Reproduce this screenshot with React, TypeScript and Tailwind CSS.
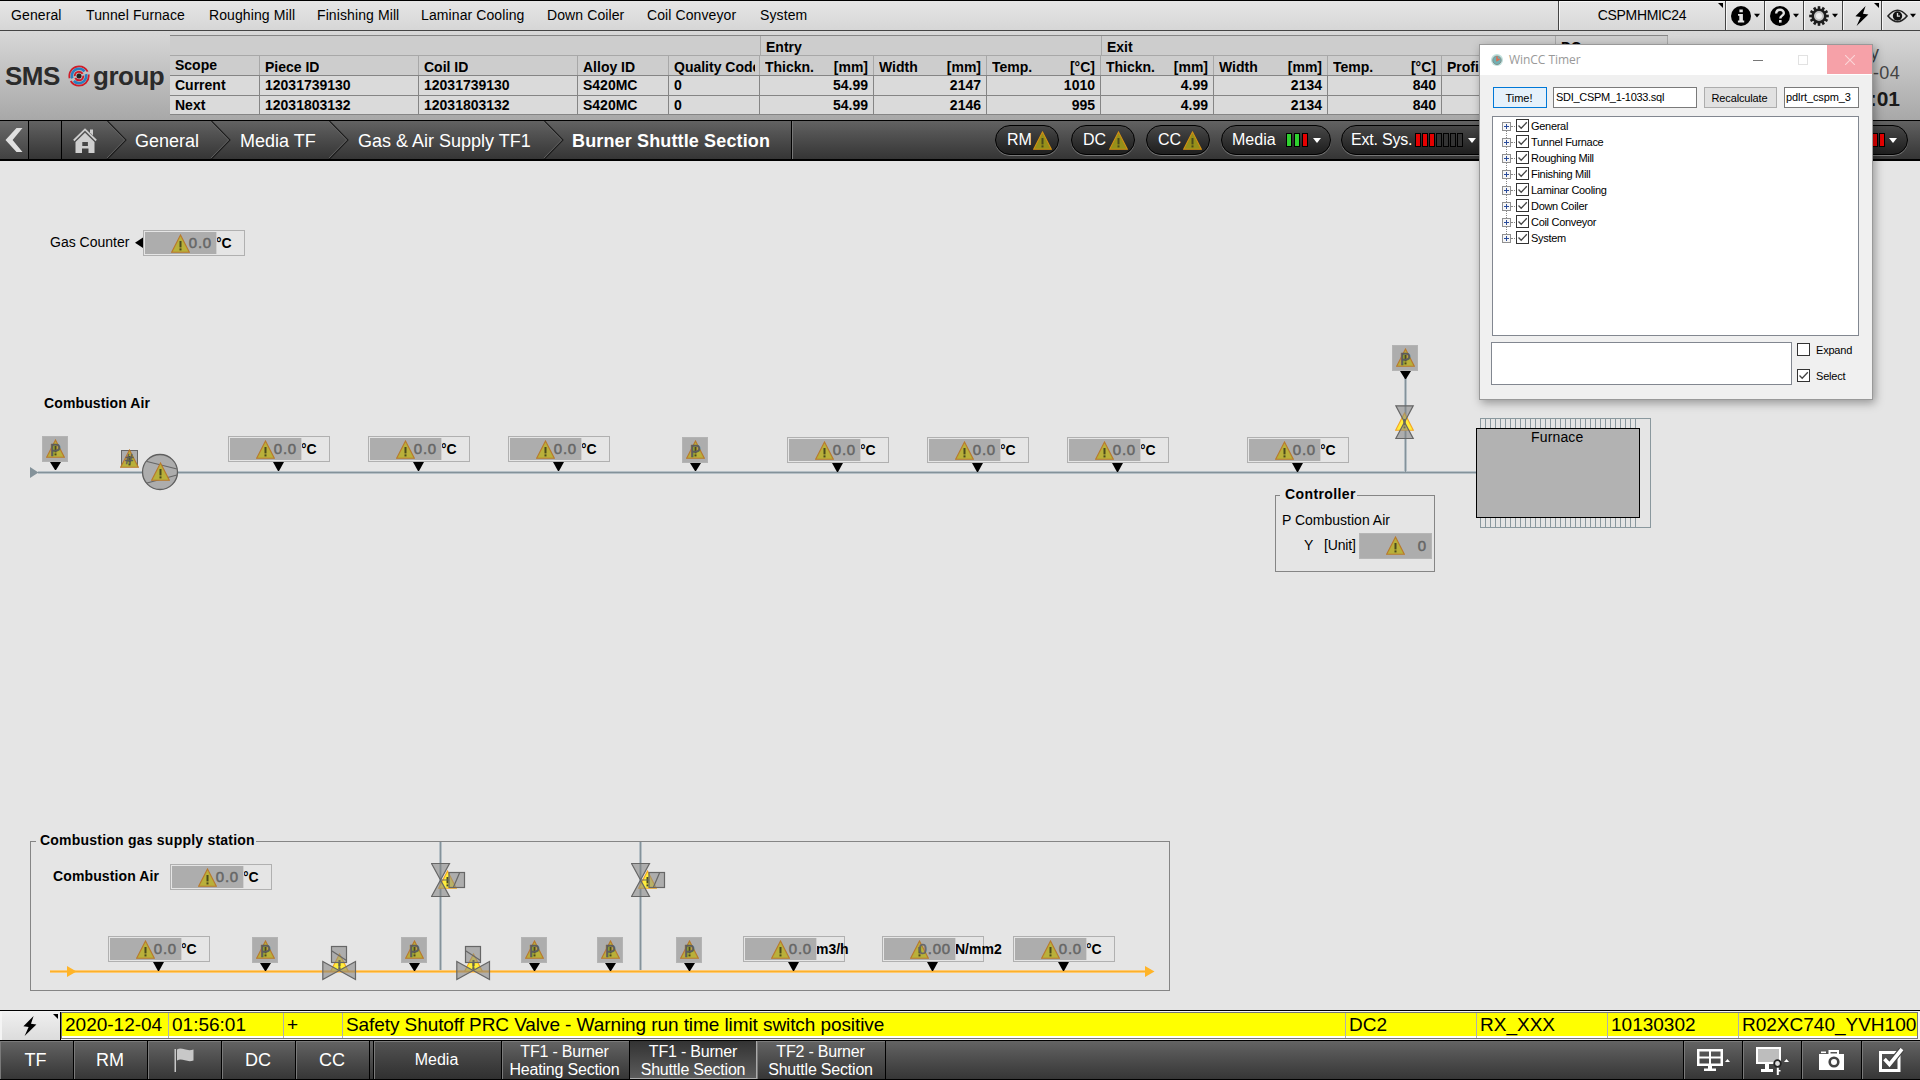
import React from 'react';

const sans = "font-['Liberation_Sans',Arial,sans-serif]";

/* ---------- shared drawings ---------- */

function Warn({ bright = false, dark = false }: { bright?: boolean; dark?: boolean }) {
  const fill = bright ? '#ffee3c' : dark ? '#96901a' : '#b9b03a';
  const stroke = bright ? '#f5a623' : dark ? '#d08f14' : '#b9792c';
  return (
    <svg viewBox="0 0 19 19" className="block h-[19px] w-[19px] shrink-0">
      <path d="M9.5 1 L18.3 18.2 H0.7 Z" fill={fill} stroke={stroke} strokeWidth="1.1" />
      <rect x="8.5" y="7" width="2" height="6.4" fill="#4a4a1c" />
      <rect x="8.5" y="14.4" width="2" height="2" fill="#4a4a1c" />
    </svg>
  );
}

function Bolt() {
  return (
    <svg viewBox="0 0 14 20" className="h-5 w-3.5">
      <path d="M10.6 0 L0.4 10.2 L5.6 11 L1.6 20 L13.4 8.6 L8 7.8 Z" fill="#000" />
    </svg>
  );
}

function Down({ className = '' }: { className?: string }) {
  return (
    <svg viewBox="0 0 8 5" className={`h-[5px] w-2 shrink-0 ${className}`}>
      <path d="M0 0 H8 L4 5 Z" fill="currentColor" />
    </svg>
  );
}

function Corner() {
  return (
    <svg viewBox="0 0 5 5" className="absolute right-[2px] top-[2px] h-[5px] w-[5px]">
      <path d="M0 0 H5 V5 Z" fill="#000" />
    </svg>
  );
}

/* ---------- top menu ---------- */

const menu = [
  ['General', 'w-[75px]'],
  ['Tunnel Furnace', 'w-[123px]'],
  ['Roughing Mill', 'w-[108px]'],
  ['Finishing Mill', 'w-[104px]'],
  ['Laminar Cooling', 'w-[126px]'],
  ['Down Coiler', 'w-[100px]'],
  ['Coil Conveyor', 'w-[113px]'],
  ['System', 'w-[80px]'],
];

const toolCell =
  'relative flex h-full items-center justify-center border-l border-[#444] bg-linear-to-b from-[#e6e6e6] to-[#d8d8d8] shadow-[inset_1px_1px_0_#f6f6f6]';

const teeth = [0, 30, 60, 90, 120, 150];

function MenuBar() {
  return (
    <div className="flex h-[31px] border-t border-b border-t-black border-b-[#444] bg-linear-to-b from-[#e6e6e6] to-[#d6d6d6]">
      <nav className="flex flex-1 items-center pl-[11px] text-[14px] tracking-[0.1px] text-black">
        {menu.map(([label, w]) => (
          <span key={label} className={`${w} whitespace-nowrap`}>{label}</span>
        ))}
      </nav>
      <div className={`${toolCell} w-[167px] text-[14px] tracking-[-0.350px]`}>CSPMHMIC24<Corner /></div>
      <div className={`${toolCell} w-[39px] gap-[3px]`}>
        <svg viewBox="0 0 20 20" className="h-5 w-5">
          <circle cx="10" cy="10" r="10" fill="#000" />
          <path d="M8.400 3.400h3.400v2.800H8.400zM7 8h4.900v6.600h1.300v1.800H6.900v-1.800h1.400V9.800H7z" fill="#e4e4e4" />
        </svg>
        <Down className="w-[6px]" />
      </div>
      <div className={`${toolCell} w-[39px] gap-[3px]`}>
        <svg viewBox="0 0 20 20" className="h-5 w-5">
          <circle cx="10" cy="10" r="10" fill="#000" />
          <path d="M6.200 7.600c0-5.200 7.800-5 7.600-.4-.1 2.300-3.500 2.700-3.500 5.200" fill="none" stroke="#e4e4e4" strokeWidth="2.400" />
          <rect x="9" y="14" width="2.600" height="2.600" fill="#e4e4e4" />
        </svg>
        <Down className="w-[6px]" />
      </div>
      <div className={`${toolCell} w-[39px] gap-[3px]`}>
        <svg viewBox="0 0 20 20" className="h-5 w-5">
          {teeth.map((a) => (
            <rect key={a} x="8.700" y="0.200" width="2.600" height="19.600" fill="#1c1c1c" transform={`rotate(${a} 10 10)`} />
          ))}
          <circle cx="10" cy="10" r="6.300" fill="#c4c4c4" stroke="#1c1c1c" strokeWidth="2.600" />
          <circle cx="10" cy="10" r="3" fill="#ececec" />
        </svg>
        <Down className="w-[6px]" />
      </div>
      <div className={`${toolCell} w-[39px]`}><Bolt /><Corner /></div>
      <div className={`${toolCell} w-[39px] gap-[2px]`}>
        <svg viewBox="0 0 22 16" className="h-4 w-[21px]">
          <path d="M1 8 Q11 -4 21 8 Q11 20 1 8 Z" fill="none" stroke="#222" strokeWidth="1.700" />
          <circle cx="11" cy="8" r="4.900" fill="#111" />
          <path d="M11 4.800v3.300h2.600" stroke="#ddd" strokeWidth="1.400" fill="none" />
        </svg>
        <Down className="w-[6px]" />
      </div>
    </div>
  );
}

/* ---------- header with piece table ---------- */

function Logo() {
  return (
    <div className="flex h-full w-[170px] items-center pl-[5px] text-[26px] font-bold leading-none tracking-[-0.500px] text-[#2b2b2b]">
      <span className="w-[63px]">SMS</span>
      <svg viewBox="0 0 22 22" className="h-[22px] w-[22px] shrink-0">
        <circle cx="11" cy="11" r="9.700" fill="none" stroke="#d01c28" strokeWidth="1.800" strokeDasharray="25 3 28 3" />
        <circle cx="11" cy="11" r="7.200" fill="none" stroke="#2a7fbf" strokeWidth="2.600" strokeDasharray="17 3 20 3" />
        <circle cx="11" cy="11" r="4.300" fill="none" stroke="#d01c28" strokeWidth="1.900" strokeDasharray="11 2" />
        <circle cx="11" cy="11" r="2.500" fill="#222" />
      </svg>
      <span className="pl-[3px]">group</span>
    </div>
  );
}

type Col = { w: string; name: string; unit?: string; cur: string; next: string; num?: boolean };

const cols: Col[] = [
  { w: 'w-[90px]', name: 'Scope', cur: 'Current', next: 'Next' },
  { w: 'w-[159px]', name: 'Piece ID', cur: '12031739130', next: '12031803132' },
  { w: 'w-[159px]', name: 'Coil ID', cur: '12031739130', next: '12031803132' },
  { w: 'w-[91px]', name: 'Alloy ID', cur: 'S420MC', next: 'S420MC' },
  { w: 'w-[91px]', name: 'Quality Code', cur: '0', next: '0' },
  { w: 'w-[114px]', name: 'Thickn.', unit: '[mm]', cur: '54.99', next: '54.99', num: true },
  { w: 'w-[113px]', name: 'Width', unit: '[mm]', cur: '2147', next: '2146', num: true },
  { w: 'w-[114px]', name: 'Temp.', unit: '[°C]', cur: '1010', next: '995', num: true },
  { w: 'w-[113px]', name: 'Thickn.', unit: '[mm]', cur: '4.99', next: '4.99', num: true },
  { w: 'w-[114px]', name: 'Width', unit: '[mm]', cur: '2134', next: '2134', num: true },
  { w: 'w-[114px]', name: 'Temp.', unit: '[°C]', cur: '840', next: '840', num: true },
  { w: 'w-[113px]', name: 'Profile', cur: '', next: '' },
  { w: 'w-[112px]', name: '', cur: '', next: '' },
];

const group = 'border-r border-[#a8a8a8] pl-[5px] pt-[4px]';

function PieceTable() {
  const cell = 'h-5 border-r border-t border-[#858585] pl-[5px] flex items-center overflow-hidden whitespace-nowrap';
  return (
    <div className="mt-[4px] flex h-[80px] w-[1498px] flex-col overflow-hidden border-b border-[#858585] text-[14px] font-bold leading-none text-black">
      <div className="flex h-5 shrink-0 border-t border-[#858585] bg-[#cdcdcd]">
        <div className="w-[591px] border-r border-[#a8a8a8]" />
        <div className={`${group} w-[341px]`}>Entry</div>
        <div className={`${group} w-[454px]`}>Exit</div>
        <div className={`${group} w-[112px]`}>DC</div>
      </div>
      <div className="flex">
        {cols.map((c, i) => (
          <div key={i} className={`${c.w} shrink-0`}>
            <div className={`${cell} border-t-[#a8a8a8] border-r-[#a8a8a8] bg-[#cdcdcd] ${i === 0 ? 'pb-[1px]' : 'pt-[3px]'} ${i === 4 ? 'pr-[4px]' : i === 5 || i === 6 ? 'pr-[5px]' : 'pr-[5px]'}`}>
              <span className="overflow-hidden py-[2px]">{c.name}</span>
              {c.unit && <span className="ml-auto">{c.unit}</span>}
            </div>
            <div className={`${cell} bg-[#dadada] pb-[1px] pr-[5px] ${c.num ? 'justify-end' : ''}`}>{c.cur}</div>
            <div className={`${cell} bg-[#dadada] pb-[1px] pr-[5px] ${c.num ? 'justify-end' : ''}`}>{c.next}</div>
          </div>
        ))}
      </div>
    </div>
  );
}

function Header() {
  return (
    <div className="flex h-[89px] bg-linear-to-b from-[#d8d8d8] to-[#a8a8a8]">
      <Logo />
      <PieceTable />
      <div className="flex flex-1 flex-col items-end pr-[20px] pt-[13px] text-[18px] leading-[19px] text-[#444]">
        <span className="mr-[21px]">Friday</span>
        <span className="mt-px tracking-[0.300px]">2020-12-04</span>
        <span className="mt-[6px] text-[21px] font-bold text-[#1a1a1a]">01:56:01</span>
      </div>
    </div>
  );
}

/* ---------- navigation bar ---------- */

function Chevron() {
  return (
    <svg viewBox="0 0 20 38" className="h-[38px] w-5 shrink-0">
      <path d="M0.500 0 L19 19 L0.500 38" fill="none" stroke="#1c1c1c" strokeWidth="1.100" />
      <path d="M-1 0 L17.600 19 L-1 38" fill="none" stroke="#6a6a6a" strokeWidth="0.800" />
    </svg>
  );
}

const pill =
  'flex h-[30px] shrink-0 items-center rounded-full border border-black bg-linear-to-b from-[#484848] to-[#1e1e1e] text-[16px] text-white shadow-[0_1px_0_#777]';

function Bars({ colors, gap }: { colors: string[]; gap: string }) {
  return (
    <div className={`flex ${gap}`}>
      {colors.map((c, i) => (
        <i key={i} className={`block h-[14px] w-[6px] border border-black ${c}`} />
      ))}
    </div>
  );
}

const G = 'bg-[#2fd02f]';
const R = 'bg-[#e60000]';
const N = 'bg-[#333]';

function NavBar() {
  return (
    <div className="flex h-[41px] items-center border-t border-b-2 border-black bg-linear-to-b from-[#626262] to-[#353535] text-[18px] text-white">
      <div className="flex h-full w-[29px] items-center justify-center border-r border-black bg-linear-to-b from-[#6a6a6a] to-[#424242]">
        <svg viewBox="0 0 18 24" className="h-6 w-[18px]">
          <path d="M11.500 0 H17.500 L7.600 12 L17.500 24 H11.500 L0.500 12 Z" fill="#e0e0e0" />
        </svg>
      </div>
      <div className="h-full w-[33px] border-r border-black" />
      <div className="flex w-[45px] justify-center">
        <svg viewBox="0 0 24 25" className="h-[25px] w-6">
          <path d="M0.800 12.500 L12 1.400 L23.200 12.500" fill="none" stroke="#cfcfcf" strokeWidth="1.800" />
          <path d="M17 1.500h3v6l-3-3z" fill="#cfcfcf" />
          <path d="M2.500 14 L12 4.800 L21.500 14 V25 H15.500 V20.500 H9 V25 H2.500 Z M9.300 14v4h5.600v-4z" fill="#cfcfcf" fillRule="evenodd" />
        </svg>
      </div>
      <Chevron />
      <span className="w-[84px] pl-[8px] pt-[2px]">General</span>
      <Chevron />
      <span className="w-[98px] pl-[9px] pt-[2px]">Media TF</span>
      <Chevron />
      <span className="w-[195px] whitespace-nowrap pl-[9px] pt-[2px]">Gas &amp; Air Supply TF1</span>
      <Chevron />
      <span className="flex h-full w-[228px] items-center whitespace-nowrap border-r border-black pl-[8px] pt-[2px] font-bold tracking-[0.140px]">Burner Shuttle Section</span>
      <div className="h-full w-[203px] border-l border-[#777]" />
      <div className={`${pill} mr-[12px] w-[64px] pl-[11px]`}>RM<span className="ml-[1px]"><Warn dark /></span></div>
      <div className={`${pill} mr-[11px] w-[64px] pl-[11px]`}>DC<span className="ml-[3px]"><Warn dark /></span></div>
      <div className={`${pill} mr-[11px] w-[64px] pl-[11px]`}>CC<span className="ml-[2px]"><Warn dark /></span></div>
      <div className={`${pill} mr-[10px] w-[110px] pl-[10px]`}>
        <span className="w-[54px]">Media</span>
        <Bars colors={[G, G, R]} gap="gap-[2px]" />
        <Down className="ml-[5px]" />
      </div>
      <div className={`${pill} w-[200px] pl-[9px]`}>
        <span className="w-[64px] tracking-[-0.200px]">Ext. Sys.</span>
        <Bars colors={[R, R, R, N, N, N, N]} gap="gap-[1px]" />
        <Down className="ml-[5px]" />
      </div>
      <div className={`${pill} ml-auto mr-[12px] w-[200px] justify-end pr-[10px]`}>
        <Bars colors={[R, R, R]} gap="gap-[1px]" />
        <Down className="ml-[4px]" />
      </div>
    </div>
  );
}

/* ---------- process picture ---------- */

const at = (x: number, y: number) => ({ left: x, top: y });

function Tip({ x, y, h = 9 }: { x: number; y: number; h?: number }) {
  return (
    <svg viewBox="0 0 11 9" preserveAspectRatio="none" className="absolute w-[11px]" style={{ ...at(x, y), height: h }}>
      <path d="M0 0 H11 L6 9 H5 Z" fill="#000" />
    </svg>
  );
}

function Meter({ x, y, unit = '°C', value = '0.0', tip = true }: { x: number; y: number; unit?: string; value?: string; tip?: boolean }) {
  return (
    <>
      <div className="absolute flex h-[26px] w-[102px] items-center border border-[#b0b0b0] p-[1px]" style={at(x, y)}>
        <div className="relative flex h-[22px] w-[71px] shrink-0 items-center justify-end bg-[#adadad] pr-[4px] shadow-[1px_0_0_#d0d0d0]">
          <span className="absolute left-[26px] top-[2px]"><Warn /></span>
          <span className="relative text-[15px] tracking-[0.800px] text-[#666] [-webkit-text-stroke:0.500px_#666]">{value}</span>
        </div>
        <span className="whitespace-nowrap text-[14px] font-bold text-black">{unit}</span>
      </div>
      {tip && <Tip x={x + 45} y={y + 26} />}
    </>
  );
}

function Pressure({ x, y }: { x: number; y: number }) {
  return (
    <>
      <div className="absolute h-[26px] w-[26px] border border-[#b4b4b4] bg-[#adadad]" style={at(x, y)}>
        <span className="absolute left-[3px] top-[2px]"><Warn /></span>
        <span className="absolute left-[7px] top-[5px] text-[16px] leading-[18px] text-[#5c5c5c] [-webkit-text-stroke:0.600px_#5c5c5c]">P</span>
      </div>
      <Tip x={x + 8} y={y + 26} h={8} />
    </>
  );
}

const body = { fill: '#848484', fillOpacity: 0.58, stroke: '#666', strokeWidth: 1.2 };

function SideValve({ x }: { x: number }) {
  return (
    <div className="absolute h-9 w-9" style={at(x, 862)}>
      <span className="absolute left-[7px] top-[8px]"><Warn bright /></span>
      <svg viewBox="0 0 36 36" className="absolute inset-0 h-9 w-9">
        <path d="M0.500 1.500 H18.500 L0.500 34.500 H18.500 Z" {...body} />
        <rect x="18" y="10.500" width="15.500" height="15" {...body} />
        <path d="M9.500 18 H18 M22.500 25 L28.500 11" stroke="#666" strokeWidth="1.200" />
      </svg>
    </div>
  );
}

function LineValve({ x }: { x: number }) {
  return (
    <div className="absolute h-9 w-9" style={at(x, 945)}>
      <span className="absolute left-[8px] top-[8px]"><Warn bright /></span>
      <svg viewBox="0 0 36 36" className="absolute inset-0 h-9 w-9">
        <path d="M0.800 16.500 V34.500 L33.500 16.500 V34.500 Z" {...body} />
        <rect x="9.500" y="1.500" width="15" height="16" {...body} />
        <path d="M17.200 17.500 V25 M10 6 L24.500 15.500" stroke="#666" strokeWidth="1.200" />
      </svg>
    </div>
  );
}

function Label({ x, y, className = '', children }: { x: number; y: number; className?: string; children: React.ReactNode }) {
  return (
    <span className={`absolute whitespace-nowrap text-[14px] leading-4 text-black ${className}`} style={at(x, y - 8)}>
      {children}
    </span>
  );
}

const fins = Array.from({ length: 32 }, (_, i) => 1480.5 + i * 5);

function Process() {
  return (
    <div className="relative h-[849px] shrink-0 overflow-hidden bg-[#e5e5e5]">
      <div className="absolute -top-[161px] left-0 h-[1010px] w-[1920px]">
        <div className="absolute left-[1275px] top-[495px] h-[77px] w-[160px] border border-[#858585]" />
        <div className="absolute left-[30px] top-[841px] h-[150px] w-[1140px] border border-[#858585]" />
        <svg viewBox="0 0 1920 1010" className="absolute inset-0 h-[1010px] w-[1920px]">
          <path d="M38 472.500 H1476 M1405.500 371 V472 M440.500 842 V971 M640.500 842 V971" stroke="#b6c0c6" strokeWidth="3" />
          <path d="M38 472.500 H1476 M1405.500 371 V472 M440.500 842 V971 M640.500 842 V971" stroke="#84929a" strokeWidth="1" />
          <path d="M30 467 L38.500 472.500 L30 478 Z" fill="#84929a" />
          <path d="M50 971.500 H1146" stroke="#ffd288" strokeWidth="3" />
          <path d="M50 971.500 H1146" stroke="#fbb02c" strokeWidth="1.400" />
          <path d="M67 966 L76.500 971.500 L67 977 Z M1145 966 L1154.500 971.500 L1145 977 Z" fill="#ffb428" />
          <path d="M143 237.500 V248 L135 242.700 Z" fill="#000" />
          <rect x="1480.500" y="418.500" width="170" height="109" fill="none" stroke="#8a989e" />
          {fins.map((x) => (
            <path key={x} d={`M${x} 418 V528`} stroke="#8a989e" />
          ))}
          <rect x="1476.500" y="428.500" width="163" height="89" fill="#b2b2b2" stroke="#000" />
          <circle cx="160" cy="472" r="17.500" fill="#adadad" stroke="#5f5f5f" strokeWidth="1.300" />
          <path d="M147 461.500 L177 469 M147 483 L177 475" stroke="#666" strokeWidth="1.200" />
        </svg>

        <Label x={50} y={242}>Gas Counter</Label>
        <Label x={44} y={403} className="font-bold tracking-[0.120px]">Combustion Air</Label>
        <Label x={1531} y={437} className="tracking-[0.150px]">Furnace</Label>
        <Label x={1280} y={494} className="bg-[#e5e5e5] pl-[5px] pr-[1px] font-bold tracking-[0.400px]">Controller</Label>
        <Label x={1282} y={520}>P Combustion Air</Label>
        <Label x={1304} y={545}>Y</Label>
        <Label x={1324} y={545} className="tracking-[-0.150px]">[Unit]</Label>
        <Label x={36} y={840} className="bg-[#e5e5e5] pl-[4px] pr-[1px] font-bold tracking-[0.220px]">Combustion gas supply station</Label>
        <Label x={53} y={876} className="font-bold tracking-[0.120px]">Combustion Air</Label>

        <Meter x={143} y={230} tip={false} />
        <Meter x={228} y={436} />
        <Meter x={368} y={436} />
        <Meter x={508} y={436} />
        <Meter x={787} y={437} />
        <Meter x={927} y={437} />
        <Meter x={1067} y={437} />
        <Meter x={1247} y={437} />
        <Meter x={170} y={864} tip={false} />
        <Meter x={108} y={936} />
        <Meter x={743} y={936} unit="m3/h" />
        <Meter x={882} y={936} unit="N/mm2" value="0.00" />
        <Meter x={1013} y={936} />

        <Pressure x={42} y={436} />
        <Pressure x={682} y={437} />
        <Pressure x={1392} y={345} />
        <Pressure x={252} y={937} />
        <Pressure x={401} y={937} />
        <Pressure x={521} y={937} />
        <Pressure x={597} y={937} />
        <Pressure x={676} y={937} />

        <div className="absolute left-[121px] top-[450px] h-[17px] w-[17px] border border-[#666] bg-[#adadad]">
          <span className="absolute -left-[2px] -top-[2px]"><Warn /></span>
          <span className="absolute left-[3px] top-0 text-[14px] italic leading-4 text-[#5c5c5c] [-webkit-text-stroke:0.500px_#5c5c5c]">#</span>
        </div>
        <span className="absolute left-[151px] top-[462px]"><Warn /></span>

        <div className="absolute left-[1359px] top-[533px] flex h-[26px] w-[73px] items-center justify-end border border-[#b6b6b6] bg-[#adadad] pr-[5px] text-[15px] text-[#666] [-webkit-text-stroke:0.500px_#666]">
          <span className="absolute left-[26px] top-[2px]"><Warn /></span>0
        </div>

        <div className="absolute left-[1395px] top-[405px] h-[35px] w-[20px]">
          <span className="absolute left-0 top-[7px]"><Warn bright /></span>
          <svg viewBox="0 0 20 35" className="absolute inset-0 h-[35px] w-5">
            <path d="M0.800 0.800 H18.200 L0.800 33.500 H18.200 Z" {...body} />
          </svg>
        </div>
        <SideValve x={431} />
        <SideValve x={631} />
        <LineValve x={322} />
        <LineValve x={456} />
      </div>
    </div>
  );
}

/* ---------- alarm line ---------- */

const alarm = [
  ['w-[107px]', '2020-12-04'],
  ['w-[115px]', '01:56:01'],
  ['w-[59px]', '+'],
  ['w-[1003px] tracking-[-0.080px]', 'Safety Shutoff PRC Valve - Warning run time limit switch positive'],
  ['w-[131px]', 'DC2'],
  ['w-[131px]', 'RX_XXX'],
  ['w-[131px]', '10130302'],
  ['w-[179px]', 'R02XC740_YVH100'],
];

function AlarmLine() {
  return (
    <div className="flex h-[30px] border-t border-black bg-[#f4f4f4] pl-[2px]">
      <div className="relative mt-px flex w-[59px] items-center justify-center border-r border-black bg-linear-to-b from-[#efefef] to-[#dcdcdc] pr-[2px]">
        <Bolt />
        <Corner />
      </div>
      <div className="mt-px flex h-[27px] w-[1857px] overflow-hidden border border-[#777] bg-white text-[19px] leading-[23px] text-black">
        {alarm.map(([w, t]) => (
          <div key={t} className={`${w} shrink-0 border-r border-[#b0b0b0]`}>
            <div className="h-[23px] overflow-hidden whitespace-nowrap bg-[#ffff00] pl-[3px]">{t}</div>
          </div>
        ))}
      </div>
    </div>
  );
}

/* ---------- bottom bar ---------- */

const dark = 'flex h-full items-center justify-center border-r border-black shadow-[inset_1px_1px_0_#7a7a7a] text-center';

function BottomBar() {
  return (
    <div className="flex h-10 border-t border-b border-black bg-linear-to-b from-[#646464] to-[#363636] text-[18px] text-white">
      <div className={`${dark} w-[74px] pr-[2px]`}>TF</div>
      <div className={`${dark} w-[74px] pr-[1px]`}>RM</div>
      <div className={`${dark} w-[74px] pr-[1px]`}>
        <svg viewBox="0 0 20 24" className="h-6 w-5">
          <path d="M0.500 1h1.500v23H0.500zM3 1.500c5-3 9 2.500 16.500 0v11c-7 2.500-11-3-16.500 0z" fill="#c8c8c8" />
        </svg>
      </div>
      <div className={`${dark} w-[74px] pr-[1px]`}>DC</div>
      <div className={`${dark} w-[74px] pr-[1px]`}>CC</div>
      <div className="w-[4px] border-r border-black" />
      <div className={`${dark} w-[128px] bg-linear-to-b from-[#545454] to-[#303030] pr-[2px] text-[16px]`}>Media</div>
      <div className={`${dark} w-[128px] pr-[2px] pt-px text-[16px] leading-[18px] tracking-[-0.200px]`}>TF1 - Burner<br />Heating Section</div>
      <div className="flex h-full w-[127px] items-center justify-center border-b border-r border-[#aaa] bg-linear-to-b from-[#333] to-[#5c5c5c] pt-[2px] text-center text-[16px] leading-[18px] tracking-[-0.200px]">TF1 - Burner<br />Shuttle Section</div>
      <div className={`${dark} w-[129px] pr-[1px] pt-px text-[16px] leading-[18px] tracking-[-0.200px]`}>TF2 - Burner<br />Shuttle Section</div>
      <div className="flex-1 border-r border-black" />
      <div className={`${dark} w-[59px] gap-[2px] pl-[1px]`}>
        <svg viewBox="0 0 26 22" className="h-[22px] w-[26px]">
          <path d="M0 0h26v17H0z M2.500 2.500v5h9.500v-5z M14 2.500v5h9.500v-5z M2.500 9.500v5h9.500v-5z M14 9.500v5h9.500v-5z" fill="#fff" fillRule="evenodd" />
          <path d="M11 17h4v2.500h4V22H7v-2.500h4z" fill="#fff" />
        </svg>
        <Down className="w-[5px] rotate-180" />
      </div>
      <div className={`${dark} w-[59px] gap-[2px]`}>
        <svg viewBox="0 0 26 25" className="mt-[4px] h-[31px] w-[26px]">
          <path d="M0 -3h25v17H0z" fill="#fff" />
          <path d="M2 -1h21v13H2z" fill="#bdbdbd" />
          <path d="M9 14h4v5h4V22H5v-3h4z" fill="#fff" />
          <circle cx="21.500" cy="13.500" r="3.300" fill="#ddd" stroke="#222" strokeWidth="1.800" />
          <path d="M20.800 17.800h2v7.200h-2zM22.500 20h2v1.600h-2z" fill="#fff" />
        </svg>
        <Down className="w-[5px] rotate-180" />
      </div>
      <div className={`${dark} w-[60px]`}>
        <svg viewBox="0 0 25 20" className="h-5 w-[25px]">
          <path d="M0 4h9.500V0H20v4h5v16H0z M11.500 2v1.500H18V2z" fill="#fff" fillRule="evenodd" />
          <path d="M2 1.500h5v1.600H2z" fill="#fff" />
          <circle cx="15" cy="12" r="4.300" fill="#fff" stroke="#444" strokeWidth="2.600" />
        </svg>
      </div>
      <div className={`${dark} w-[58px] border-r-0`}>
        <svg viewBox="0 0 25 24" className="h-6 w-[25px]">
          <path d="M1.500 4.500H20V22.500H1.500z" fill="none" stroke="#fff" strokeWidth="3" />
          <path d="M5.500 11 L10.500 16.500 L23 1" fill="none" stroke="#444" strokeWidth="6" />
          <path d="M5.500 11 L10.500 16.500 L23 1" fill="none" stroke="#fff" strokeWidth="3.600" />
        </svg>
      </div>
    </div>
  );
}

/* ---------- WinCC Timer window ---------- */

function Check({ on = true }: { on?: boolean }) {
  return (
    <span className="block h-[13px] w-[13px] shrink-0 border border-[#333] bg-white">
      {on && (
        <svg viewBox="0 0 11 11" className="h-[11px] w-[11px]">
          <path d="M1.500 5.500 L4.200 8.300 L9.800 2.300" fill="none" stroke="#444" strokeWidth="1.300" />
        </svg>
      )}
    </span>
  );
}

const tree = ['General', 'Tunnel Furnace', 'Roughing Mill', 'Finishing Mill', 'Laminar Cooling', 'Down Coiler', 'Coil Conveyor', 'System'];

function TimerWindow() {
  return (
    <div className="absolute left-[1479px] top-[44px] flex h-[356px] w-[394px] flex-col border border-[#999] bg-[#f0f0f0] text-[11px] tracking-[-0.300px] text-black shadow-[2px_3px_9px_rgba(0,0,0,0.35)]">
      <div className="flex h-[30px] shrink-0 items-center bg-white">
        <svg viewBox="0 0 14 14" className="ml-[10px] h-[14px] w-[14px]">
          <circle cx="7" cy="7" r="6" fill="#bfe0dc" />
          <circle cx="7" cy="7.300" r="4.200" fill="#6fb0b4" stroke="#84908c" />
          <path d="M7 3.500v4l2.500-1.500" stroke="#e06a4c" strokeWidth="1.500" fill="none" />
        </svg>
        <span className="ml-[5px] font-['Open_Sans',sans-serif] text-[12px] tracking-[-0.050px] text-[#999]">WinCC Timer</span>
        <span className="ml-auto block h-px w-[10px] bg-[#777]" />
        <span className="ml-[35px] block h-[10px] w-[10px] border border-[#e2e2e2]" />
        <span className="ml-[19px] flex h-[29px] w-[45px] items-center justify-center self-start bg-[#f6a1a8]">
          <svg viewBox="0 0 10 10" className="h-[10px] w-[10px]">
            <path d="M0 0L10 10M10 0L0 10" stroke="#fbd5d8" strokeWidth="1.100" />
          </svg>
        </span>
      </div>
      <div className="mt-[12px] flex h-[21px] shrink-0 pl-[13px] leading-[20px]">
        <div className="w-[54px] border border-[#0078d7] bg-[#e5f1fb] pr-[2px] text-center tracking-normal">Time!</div>
        <div className="ml-[6px] w-[144px] border border-[#7a7a7a] bg-white pl-[2px] leading-[18px]">SDI_CSPM_1-1033.sql</div>
        <div className="ml-[7px] w-[73px] border border-[#adadad] bg-[#e1e1e1] pr-[2px] text-center tracking-[-0.150px]">Recalculate</div>
        <div className="ml-[7px] w-[75px] border border-[#7a7a7a] bg-white pl-[1px] leading-[18px] tracking-[-0.100px]">pdlrt_cspm_3</div>
      </div>
      <div className="ml-[12px] mt-[8px] h-[220px] w-[367px] shrink-0 border border-[#828790] bg-white pl-[9px] pt-[1px]">
        {tree.map((t, i) => (
          <div key={t} className="relative flex h-4 items-center">
            {i < tree.length - 1 && <span className="absolute left-[4px] top-[13px] h-[7px] border-l border-dotted border-[#888]" />}
            <svg viewBox="0 0 9 9" className="h-[9px] w-[9px]">
              <rect x="0.500" y="0.500" width="8" height="8" fill="#f6f6f6" stroke="#919191" />
              <path d="M2 4.500H7M4.500 2V7" stroke="#2b4c9b" />
            </svg>
            <span className="mr-[1px] w-[4px] border-t border-dotted border-[#888]" />
            <span className="-mt-px"><Check /></span>
            <span className="pl-[2px]">{t}</span>
          </div>
        ))}
      </div>
      <div className="mt-[6px] flex pl-[11px]">
        <div className="h-[43px] w-[301px] border border-[#828790] bg-white" />
        <div className="ml-[5px] flex flex-col gap-[13px] pt-[1px] leading-[14px] tracking-[-0.200px]">
          <div className="flex h-[13px] gap-[6px]"><Check on={false} />Expand</div>
          <div className="flex h-[13px] gap-[6px]"><Check />Select</div>
        </div>
      </div>
    </div>
  );
}

export default function App() {
  return (
    <div className={`relative flex h-[1080px] w-[1920px] flex-col overflow-hidden bg-[#e5e5e5] ${sans}`}>
      <MenuBar />
      <Header />
      <NavBar />
      <Process />
      <AlarmLine />
      <BottomBar />
      <TimerWindow />
    </div>
  );
}
